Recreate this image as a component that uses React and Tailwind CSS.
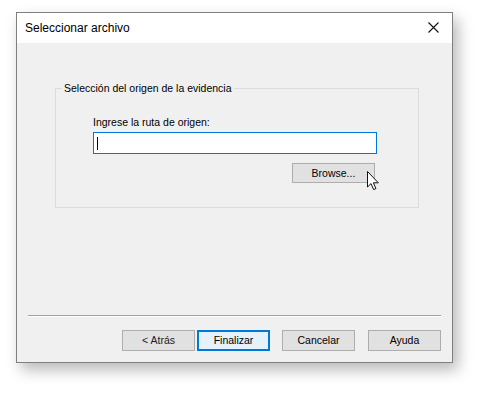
export default function App() {
  const font = { fontFamily: '"Liberation Sans", Arial, sans-serif' };

  return (
    <div className="w-[502px] h-[398px] bg-white pl-[16px] pt-[12px] relative" style={font}>
      {/* Dialog window */}
      <div className="w-[437px] h-[351px] border border-[#7f7f7f] bg-[#f0f0f0] flex flex-col shadow-[5px_7px_14px_rgba(0,0,0,0.28)]">
        {/* Title bar */}
        <div className="h-[30px] bg-white flex items-center justify-between pl-[8px] pr-[13px]">
          <span className="text-[12px] text-black leading-none">Seleccionar archivo</span>
          <svg width="11" height="11" viewBox="0 0 11 11" className="mt-[-2px]">
            <path d="M0.5 0.5 L10.5 10.5 M10.5 0.5 L0.5 10.5" stroke="#111" strokeWidth="1.1" />
          </svg>
        </div>

        {/* Body */}
        <div className="flex-1 flex flex-col">
          <fieldset className="ml-[38px] mt-[39px] w-[364px] border border-[#dcdcdc] pb-[24px]">
            <legend className="ml-[6px] px-[2px] text-[10.5px] leading-[13px] text-black">
              Selección del origen de la evidencia
            </legend>
            <div className="ml-[37px] w-[284px] flex flex-col pt-[20px]">
              <span className="text-[10.5px] leading-[14px] text-black">Ingrese la ruta de origen:</span>
              <div className="mt-[3px] h-[22px] bg-white border border-[#0078d7] flex items-center pl-[3px]">
                <span className="w-[1px] h-[13px] bg-black" />
              </div>
              <div className="flex justify-end pr-[2px] mt-[9px]">
                <button className="w-[83px] h-[20px] bg-[#e1e1e1] border border-[#adadad] text-[10.5px] text-black leading-none">
                  Browse...
                </button>
              </div>
            </div>
          </fieldset>

          <div className="flex-1" />

          <div className="mx-[11px] h-[1px] bg-[#a0a0a0] border-b border-white box-content" />

          <div className="flex justify-end gap-[2px] px-[11px] pt-[13px] pb-[11px]">
            <button className="w-[73px] h-[21px] bg-[#e1e1e1] border border-[#adadad] text-[10.5px] text-[#222] leading-none">
              &lt; Atrás
            </button>
            <button className="w-[73px] h-[21px] bg-[#e5f1fb] border-[2px] border-[#0078d7] text-[10.5px] text-black leading-none">
              Finalizar
            </button>
            <button className="ml-[10px] w-[73px] h-[21px] bg-[#e1e1e1] border border-[#adadad] text-[10.5px] text-black leading-none">
              Cancelar
            </button>
            <button className="ml-[11px] w-[73px] h-[21px] bg-[#e1e1e1] border border-[#adadad] text-[10.5px] text-black leading-none">
              Ayuda
            </button>
          </div>
        </div>
      </div>

      {/* Mouse pointer */}
      <svg className="absolute left-[367px] top-[171px]" width="13" height="20" viewBox="0 0 13 20">
        <path
          d="M0.5 0.5 L0.5 16 L4 12.6 L6.6 18.6 L8.9 17.6 L6.4 11.8 L11.3 11.8 Z"
          fill="white"
          stroke="#111"
          strokeWidth="1"
          strokeLinejoin="round"
        />
      </svg>
    </div>
  );
}
